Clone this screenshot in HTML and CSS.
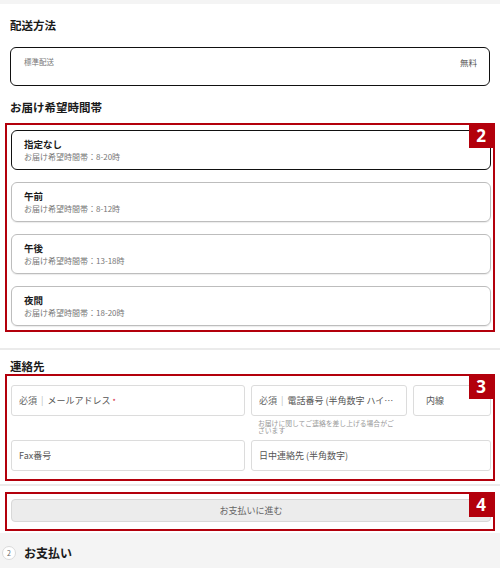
FILE: index.html
```html
<!DOCTYPE html>
<html lang="ja">
<head>
<meta charset="utf-8">
<link rel="stylesheet" href="styles.css">
</head>
<body>
<div class="page">
  <section class="card card-first">
    <h2 class="heading">配送方法</h2>
    <div class="ship-box">
      <span class="ship-name">標準配送</span>
      <span class="ship-price">無料</span>
    </div>
    <h2 class="heading heading-spaced">お届け希望時間帯</h2>
    <div class="mark mark-slots">
      <span class="badge">2</span>
      <div class="slots">
        <div class="slot slot-selected">
          <div class="slot-title">指定なし</div>
          <div class="slot-sub">お届け希望時間帯：8-20時</div>
        </div>
        <div class="slot">
          <div class="slot-title">午前</div>
          <div class="slot-sub">お届け希望時間帯：8-12時</div>
        </div>
        <div class="slot">
          <div class="slot-title">午後</div>
          <div class="slot-sub">お届け希望時間帯：13-18時</div>
        </div>
        <div class="slot">
          <div class="slot-title">夜間</div>
          <div class="slot-sub">お届け希望時間帯：18-20時</div>
        </div>
      </div>
    </div>
  </section>

  <section class="card card-contact">
    <h2 class="heading heading-contact">連絡先</h2>
    <div class="mark mark-contact">
      <span class="badge">3</span>
      <div class="contact-grid">
        <div class="field f-email"><span class="ph"><span class="req">必須</span><span class="sep">|</span>メールアドレス<span class="star">*</span></span></div>
        <div class="field f-phone"><span class="ph"><span class="req">必須</span><span class="sep">|</span>電話番号 (半角数字 ハイフンなし)</span></div>
        <div class="field f-ext"><span class="ph">内線</span></div>
        <div class="helper">お届けに関してご連絡を差し上げる場合がございます</div>
        <div class="field f-fax"><span class="ph">Fax番号</span></div>
        <div class="field f-day"><span class="ph">日中連絡先 (半角数字)</span></div>
      </div>
    </div>
  </section>

  <section class="card card-button">
    <div class="mark mark-button">
      <span class="badge">4</span>
      <div class="next-btn">お支払いに進む</div>
    </div>
  </section>

  <div class="step">
    <span class="step-num">2</span>
    <span class="step-title">お支払い</span>
  </div>
</div>
</body>
</html>
```

FILE: styles.css
```css
* { box-sizing: border-box; }

html, body {
  margin: 0;
  padding: 0;
}

body {
  background: #f4f4f4;
  font-family: "Noto Sans CJK JP", "Noto Sans", sans-serif;
  color: #222;
  width: 500px;
}

.page {
  padding-top: 4px;
}

.card {
  background: #fff;
  padding: 0 10px;
}

.card-first {
  padding-top: 13px;
  padding-bottom: 16px;
}

.card-contact {
  border-top: 2px solid #ebebeb;
  padding-top: 8px;
  padding-bottom: 3px;
}

.card-button {
  border-top: 2px solid #ebebeb;
  padding-top: 6px;
  padding-bottom: 2px;
}

.heading {
  margin: 0;
  font-size: 11.5px;
  line-height: 17px;
  font-weight: 700;
  color: #1a1a1a;
}

.heading-spaced {
  margin-top: 13px;
}

.heading-contact {
  line-height: 16px;
}

.ship-box {
  margin-top: 13px;
  height: 39px;
  border: 1.5px solid #111;
  border-radius: 6px;
  padding: 9px 12px 0 13px;
  display: flex;
  justify-content: space-between;
  align-items: flex-start;
}

.ship-name {
  font-size: 7.5px;
  line-height: 10px;
  color: #777;
}

.ship-price {
  font-size: 8.5px;
  line-height: 10px;
  color: #555;
}

/* annotation boxes */
.mark {
  position: relative;
  border: 2px solid #b3000c;
  margin-left: -5px;
  margin-right: -5px;
  padding-left: 4px;
  padding-right: 2px;
}

.mark-slots {
  margin-top: 7px;
  padding-top: 5px;
  padding-bottom: 4px;
}

.mark-contact {
  padding-top: 9px;
  padding-bottom: 8px;
}

.mark-button {
  padding-top: 5px;
  padding-bottom: 7px;
}

.badge {
  position: absolute;
  top: -2px;
  right: 0;
  width: 24px;
  height: 25px;
  background: #b3000c;
  color: #fff;
  font-family: "Open Sans", "Noto Sans", sans-serif;
  font-weight: 700;
  font-size: 17px;
  line-height: 25px;
  text-align: center;
  z-index: 2;
}

.slots {
  display: flex;
  flex-direction: column;
  gap: 12px;
}

.slot {
  height: 40px;
  border: 1px solid #bdbdbd;
  border-radius: 6px;
  padding: 7px 13px 0 12px;
  box-shadow: 0 1px 1px rgba(0, 0, 0, 0.08);
}

.slot-selected {
  border: 1.5px solid #111;
  padding-top: 6.5px;
  box-shadow: none;
}

.slot-title {
  font-size: 9.5px;
  line-height: 13px;
  font-weight: 700;
  color: #1a1a1a;
}

.slot-sub {
  font-size: 8px;
  line-height: 11px;
  color: #777;
}

/* contact */
.contact-grid {
  display: grid;
  grid-template-columns: 234px 156px 1fr;
  grid-template-rows: 31px 24px 31px;
  column-gap: 6px;
}

.field {
  border: 1px solid #dcdcdc;
  border-radius: 3px;
  background: #fff;
  display: flex;
  align-items: center;
  padding: 0 7px;
  overflow: hidden;
}

.ph {
  font-size: 9px;
  line-height: 12px;
  color: #555;
  white-space: nowrap;
  overflow: hidden;
  text-overflow: ellipsis;
  display: block;
  min-width: 0;
}

.req {
  color: #666;
}

.sep {
  color: #bbb;
  margin: 0 4px;
}

.star {
  color: #d0021b;
  font-size: 7px;
  vertical-align: top;
  margin-left: 2px;
}

.f-email { grid-column: 1; grid-row: 1; }
.f-phone { grid-column: 2; grid-row: 1; }
.f-ext { grid-column: 3; grid-row: 1; padding-left: 12px; }
.helper {
  grid-column: 2;
  grid-row: 2;
  padding: 4px 7px 0;
  font-size: 6.8px;
  line-height: 7px;
  color: #999;
}
.f-fax { grid-column: 1; grid-row: 3; }
.f-day { grid-column: 2 / 4; grid-row: 3; }

/* button */
.next-btn {
  height: 23px;
  background: #ececec;
  border: 1px solid #d8d8d8;
  border-radius: 4px;
  text-align: center;
  font-size: 9px;
  line-height: 21px;
  color: #666;
}

/* step */
.step {
  display: flex;
  align-items: center;
  gap: 8px;
  padding: 12px 0 0 2px;
}

.step-num {
  width: 14px;
  height: 14px;
  border-radius: 50%;
  background: #fff;
  border: 1px solid #dadada;
  font-size: 7px;
  line-height: 12px;
  text-align: center;
  color: #666;
}

.step-title {
  font-size: 12px;
  line-height: 16px;
  font-weight: 700;
  color: #1a1a1a;
}
```
